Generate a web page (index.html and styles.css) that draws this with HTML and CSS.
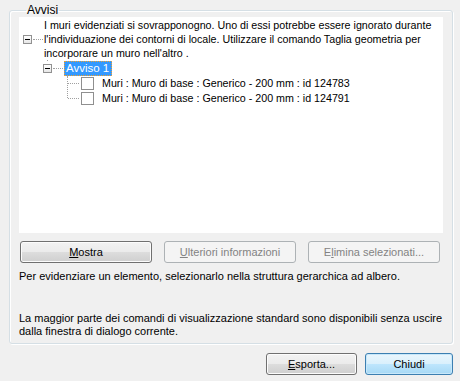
FILE: index.html
```html
<!DOCTYPE html>
<html lang="it">
<head>
    <meta charset="UTF-8">
    <title>Avvisi</title>
    <link rel="stylesheet" href="styles.css">
</head>
<body>
    <div class="dialog">
        <fieldset class="group">
            <legend>Avvisi</legend>
            <div class="tree">
                <div class="node root">
                    <div class="node-row">
                        <span class="toggle"></span>
                        <span class="hline"></span>
                        <span class="label multi">I muri evidenziati si sovrapponogno. Uno di essi potrebbe essere ignorato durante<br>l'individuazione dei contorni di locale. Utilizzare il comando Taglia geometria per<br>incorporare un muro nell'altro .</span>
                    </div>
                    <div class="children">
                        <div class="node warn">
                            <span class="vstub"></span>
                            <div class="node-row">
                                <span class="toggle"></span>
                                <span class="hline"></span>
                                <span class="label selected">Avviso 1</span>
                            </div>
                            <div class="leaves">
                                <div class="leaf">
                                    <span class="hline short"></span>
                                    <span class="check"></span>
                                    <span class="label">Muri : Muro di base : Generico - 200 mm : id 124783</span>
                                </div>
                                <div class="leaf last">
                                    <span class="hline short"></span>
                                    <span class="check"></span>
                                    <span class="label">Muri : Muro di base : Generico - 200 mm : id 124791</span>
                                </div>
                            </div>
                        </div>
                    </div>
                </div>
            </div>
            <div class="actions">
                <button class="btn"><u>M</u>ostra</button>
                <button class="btn" disabled><u>U</u>lteriori informazioni</button>
                <button class="btn" disabled>E<u>l</u>imina selezionati...</button>
            </div>
            <p class="hint">Per evidenziare un elemento, selezionarlo nella struttura gerarchica ad albero.</p>
            <p class="hint note">La maggior parte dei comandi di visualizzazione standard sono disponibili senza uscire<br>dalla finestra di dialogo corrente.</p>
        </fieldset>
        <div class="footer">
            <button class="btn export"><u>E</u>sporta...</button>
            <button class="btn primary">Chiudi</button>
        </div>
    </div>
</body>
</html>
```

FILE: styles.css
```css
body {
    margin: 0;
    background-color: #f0f0f0;
    color: #000;
    font-family: 'Liberation Sans', Arial, sans-serif;
    font-size: 11px;
}
.dialog {
    padding: 3px 7px 0 9px;
}
.group {
    box-sizing: border-box;
    margin: 0;
    padding: 0 9px 0 9px;
    height: 341px;
    border: 1px solid #d5dfe5;
    border-radius: 3px;
    box-shadow: inset 1px 1px 0 #fff, 1px 1px 0 #fff;
}
.group legend {
    padding: 0 1px;
    margin-left: 7px;
    font-size: 12px;
    line-height: 14px;
}
.tree {
    background: #fff;
    height: 215px;
    padding: 1px 0 0 4px;
    font-size: 10.7px;
    white-space: nowrap;
}
.node-row {
    display: flex;
    align-items: center;
}
.toggle {
    position: relative;
    width: 7px;
    height: 7px;
    border: 1px solid #919191;
    background: linear-gradient(#fff, #e6e6e6);
    flex: none;
}
.toggle::after {
    content: '';
    position: absolute;
    left: 1px;
    top: 3px;
    width: 5px;
    height: 1px;
    background: #000;
}
.hline {
    width: 10px;
    height: 0;
    border-top: 1px dotted #a0a0a0;
    margin: 0 1px 0 1px;
    flex: none;
}
.label {
    line-height: 13px;
}
.label.multi {
    line-height: 14px;
}
.children {
    padding-left: 20px;
}
.warn {
    display: flex;
    flex-direction: column;
}
.vstub {
    width: 0;
    height: 1px;
    margin-left: 4px;
    border-left: 1px dotted #a0a0a0;
}
.warn .node-row {
    height: 15px;
}
.label.selected {
    background: #3399ff;
    color: #fff;
    padding: 0 3px 0 2px;
    line-height: 14px;
    font-size: 11.5px;
    outline: 1px dotted #f0a030;
    outline-offset: -1px;
    height: 15px;
}
.leaves {
    margin-left: 24px;
    border-left: 1px dotted #a0a0a0;
    width: 360px;
}
.leaf {
    display: flex;
    align-items: center;
    height: 15px;
}
.leaf.last {
    background: linear-gradient(to bottom, transparent 8px, #fff 8px) no-repeat;
    margin-left: -1px;
    padding-left: 1px;
}
.hline.short {
    width: 11px;
    margin: 0 2px 0 0;
}
.check {
    width: 11px;
    height: 11px;
    border: 1px solid #8f8f8f;
    background: #fff;
    margin-right: 8px;
    flex: none;
}
.actions {
    display: flex;
    gap: 12px;
    margin: 8px 0 0 1px;
}
.btn {
    height: 22px;
    width: 132px;
    padding: 0;
    border: 1px solid #707070;
    border-radius: 3px;
    background: linear-gradient(#f2f2f2 0, #ebebeb 50%, #dddddd 50%, #cfcfcf 100%);
    font-family: 'Liberation Sans', Arial, sans-serif;
    font-size: 11px;
    color: #000;
    box-shadow: inset 0 0 0 1px #fcfcfc;
}
.btn:disabled {
    border-color: #adb2b5;
    background: #f4f4f4;
    color: #838383;
    box-shadow: none;
}
.hint {
    margin: 7px 0 0 0;
    line-height: 13px;
    white-space: nowrap;
}
.hint.note {
    margin-top: 29px;
}
.footer {
    display: flex;
    justify-content: flex-end;
    gap: 8px;
    margin-top: 9px;
}
.btn.export {
    width: 91px;
}
.btn.primary {
    width: 88px;
    border-color: #3c7fb1;
    background: linear-gradient(#eaf6fd 0, #d9f0fc 50%, #bee6fd 50%, #a7d9f5 100%);
    box-shadow: inset 0 0 0 1px #c8e8fa;
}
```
